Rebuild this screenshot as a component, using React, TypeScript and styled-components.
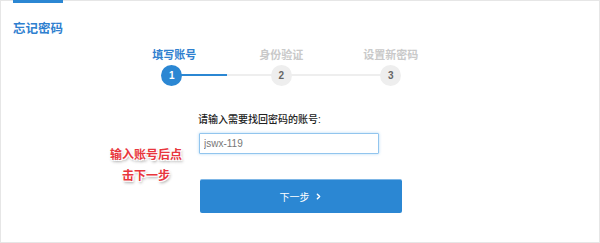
import React from "react";
import styled, { createGlobalStyle } from "styled-components";
import { ChevronRight } from "lucide-react";

const Global = createGlobalStyle`
  html, body { margin: 0; padding: 0; background: #fff; }
  body { font-family: "Liberation Sans", "Noto Sans CJK SC", sans-serif; }
  * { box-sizing: border-box; }
`;

const BLUE = "#2b87d3";

const Page = styled.div`
  position: relative;
  width: 600px;
  height: 243px;
  border: 1px solid #e6e6e6;
  background: #fff;
  padding-left: 12px;
`;

const Header = styled.div`
  display: flex;
  margin-top: -1px;
`;

const TitleTab = styled.div`
  border-top: 3px solid ${BLUE};
  width: 50px;
  padding-top: 19px;
  font-size: 12.5px;
  line-height: 14px;
  font-weight: bold;
  color: #2f80cf;
  white-space: nowrap;
`;

const Steps = styled.div`
  display: flex;
  margin-top: 13px;
  margin-left: 104px;
`;

const Step = styled.div<{ $first?: boolean; $last?: boolean; $leftActive?: boolean; $rightActive?: boolean }>`
  position: relative;
  width: 109.5px;
  display: flex;
  flex-direction: column;
  align-items: center;
  &::before, &::after {
    content: "";
    position: absolute;
    top: 25px;
    height: 2px;
    width: 50%;
  }
  &::before {
    left: 0;
    background: ${(p) => (p.$first ? "transparent" : p.$leftActive ? BLUE : "#eeeeee")};
  }
  &::after {
    right: 0;
    background: ${(p) => (p.$last ? "transparent" : p.$rightActive ? BLUE : "#eeeeee")};
  }
`;

const StepLabel = styled.div<{ $active?: boolean }>`
  font-size: 11px;
  line-height: 13px;
  font-weight: bold;
  color: ${(p) => (p.$active ? "#2f80cf" : "#c9c9c9")};
  white-space: nowrap;
  padding-left: ${(p) => (p.$active ? "5px" : "0")};
`;

const Circle = styled.div<{ $active?: boolean }>`
  position: relative;
  z-index: 1;
  margin-top: 3px;
  width: 21px;
  height: 21px;
  border-radius: 50%;
  background: ${(p) => (p.$active ? BLUE : "#eeeeee")};
  color: ${(p) => (p.$active ? "#fff" : "#666")};
  font-size: 10px;
  font-weight: bold;
  display: flex;
  align-items: center;
  justify-content: center;
`;

const Form = styled.div`
  display: flex;
  flex-direction: column;
  margin-top: 28px;
  margin-left: 185px;
`;

const FieldLabel = styled.div`
  font-size: 10px;
  line-height: 12px;
  font-weight: 500;
  color: #222;
  white-space: nowrap;
`;

const TextInput = styled.input`
  margin-top: 7px;
  width: 180px;
  height: 21px;
  margin-left: 1px;
  border: 1px solid #92c5ee;
  border-radius: 1px;
  box-shadow: 0 0 3px rgba(82, 168, 236, 0.45);
  padding: 0 4px;
  font-family: "Liberation Sans", sans-serif;
  font-size: 10px;
  color: #777;
  outline: none;
`;

const NextButton = styled.button`
  margin-top: 25px;
  margin-left: 2px;
  width: 202px;
  height: 34px;
  border: none;
  border-top: 1px solid #7db6e6;
  border-radius: 2px;
  background: ${BLUE};
  color: #fff;
  font-family: "Liberation Sans", "Noto Sans CJK SC", sans-serif;
  font-size: 10px;
  display: flex;
  align-items: center;
  justify-content: center;
  gap: 4px;
  padding: 0;
`;

const Note = styled.div`
  position: absolute;
  left: 104px;
  top: 144px;
  width: 82px;
  text-align: center;
  font-size: 12px;
  line-height: 21px;
  font-weight: bold;
  color: #e8363d;
  text-shadow: -1px -1px 0 #fff, 1px -1px 0 #fff, -1px 1px 0 #fff, 1px 1px 0 #fff,
    1px 2px 3px rgba(0, 0, 0, 0.45);
`;

export default function App() {
  return (
    <>
      <Global />
      <Page>
        <Header>
          <TitleTab>忘记密码</TitleTab>
        </Header>
        <Steps>
          <Step $first $rightActive>
            <StepLabel $active>填写账号</StepLabel>
            <Circle $active>1</Circle>
          </Step>
          <Step>
            <StepLabel>身份验证</StepLabel>
            <Circle>2</Circle>
          </Step>
          <Step $last>
            <StepLabel>设置新密码</StepLabel>
            <Circle>3</Circle>
          </Step>
        </Steps>
        <Form>
          <FieldLabel>请输入需要找回密码的账号:</FieldLabel>
          <TextInput defaultValue="jswx-119" autoFocus />
          <NextButton>
            下一步
            <ChevronRight size={9} strokeWidth={4} />
          </NextButton>
        </Form>
        <Note>
          输入账号后点
          <br />
          击下一步
        </Note>
      </Page>
    </>
  );
}
